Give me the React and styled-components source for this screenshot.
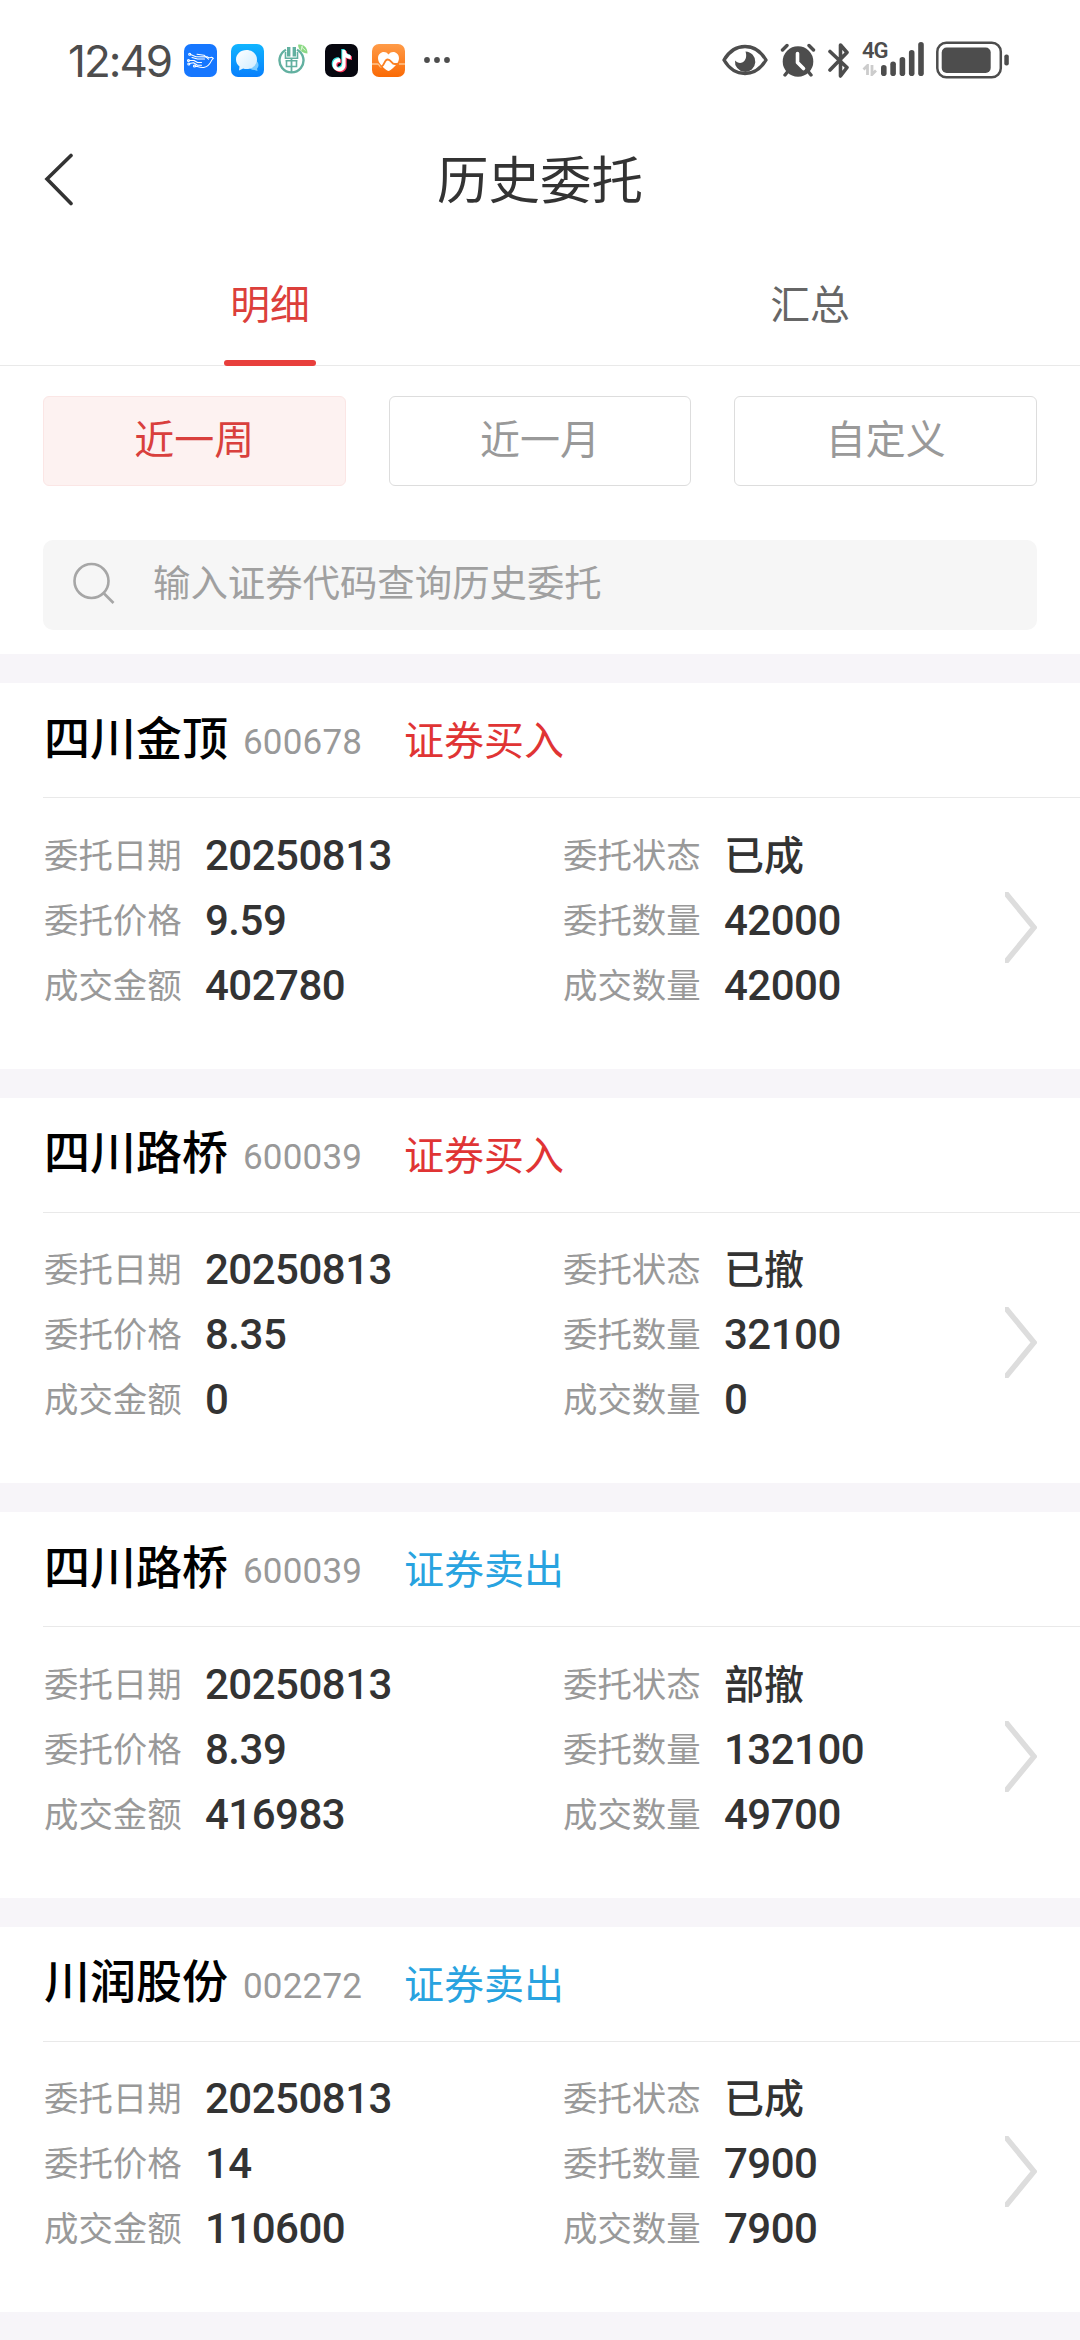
import React, { useState } from 'react';
import styled, { createGlobalStyle } from 'styled-components';

const GlobalStyle = createGlobalStyle`
  * {
    box-sizing: border-box;
  }
  body {
    margin: 0;
    background: #F7F5F9;
    font-family: Roboto, 'Noto Sans CJK SC', sans-serif;
  }
  button {
    padding: 0;
    border: none;
    background: none;
    font-family: inherit;
    cursor: pointer;
  }
  svg {
    display: block;
    flex-shrink: 0;
  }
`;

const Page = styled.div`
  width: 1080px;
  height: 2340px;
  overflow: hidden;
  background: #F7F5F9;
  display: flex;
  flex-direction: column;
`;

const TopArea = styled.div`
  height: 654px;
  flex-shrink: 0;
  background: #FFF;
`;

const StatusBar = styled.div`
  height: 120px;
  padding: 0 71px 0 68px;
  display: flex;
  align-items: center;
  justify-content: space-between;
`;

const StatusGroup = styled.div`
  display: flex;
  align-items: center;
`;

const Clock = styled.div`
  width: 116px;
  color: #4D4D4D;
  font-family: Inter, sans-serif;
  font-size: 44px;
  line-height: 50px;
  letter-spacing: -2px;
  padding-top: 2px;
  white-space: nowrap;
`;

const AppIcons = styled.div`
  display: flex;
  gap: 14px;
  margin-right: 18px;
`;

const Network = styled.div`
  width: 62px;
  height: 36px;
  margin: 0 12px 0 12px;
  display: flex;
  justify-content: space-between;
`;

const NetworkType = styled.div`
  width: 19px;
  color: #4D4D4D;
  font-size: 22px;
  font-weight: 600;
  line-height: 18px;
  letter-spacing: -1px;
  white-space: nowrap;
  display: flex;
  flex-direction: column;
  gap: 4px;
`;

const NavBar = styled.div`
  height: 120px;
  padding: 0 44px;
  display: grid;
  grid-template-columns: 60px 1fr 60px;
  align-items: center;
`;

const NavTitle = styled.div`
  padding-top: 3px;
  color: #333;
  font-size: 51.5px;
  line-height: 60px;
  text-align: center;
`;

const Tabs = styled.div`
  height: 126px;
  display: flex;
  border-bottom: 1px solid #E9E9E9;
`;

const Tab = styled.button`
  flex: 1;
  height: 126px;
  padding-top: 36px;
  display: flex;
  flex-direction: column;
  align-items: center;
  justify-content: space-between;
  color: ${props => (props.$active ? '#DC3F3B' : '#666')};
  font-size: 39.8px;
  line-height: 60px;
`;

const TabLine = styled.div`
  width: 92px;
  height: 6px;
  border-radius: 3px;
  background: #E83F3C;
`;

const Ranges = styled.div`
  display: flex;
  gap: 43px;
  padding: 30px 43px 0;
`;

const RangeButton = styled.button`
  flex: 1;
  height: 90px;
  padding-bottom: 8px;
  border-radius: 6px;
  border: 1.5px solid ${props => (props.$active ? '#FBE6E5' : '#DDD')};
  background: ${props => (props.$active ? '#FDF2F1' : '#FFF')};
  color: ${props => (props.$active ? '#D9403D' : '#999')};
  font-size: 40px;
`;

const SearchBox = styled.label`
  height: 90px;
  margin: 54px 43px 0;
  padding-left: 30px;
  border-radius: 10px;
  background: #F6F6F6;
  display: flex;
  align-items: center;
  gap: 38px;
`;

const SearchInput = styled.input`
  width: 700px;
  padding: 0 0 2px;
  border: none;
  outline: none;
  background: none;
  font-family: inherit;
  font-size: 37.4px;
  color: #333;

  &::placeholder {
    color: #A0A0A0;
    opacity: 1;
  }
`;

const OrderList = styled.div`
  display: flex;
  flex-direction: column;
  gap: 29px;
  padding-top: 29px;
`;

const OrderCard = styled.div`
  height: 385.5px;
  background: #FFF;
`;

const OrderHead = styled.div`
  height: 115px;
  margin-left: 43px;
  padding: 0 0 3px 1px;
  border-bottom: 1.5px solid #E9E9E9;
  display: flex;
  align-items: center;
`;

const StockName = styled.div`
  width: 199px;
  color: #000;
  font-size: 46px;
  font-weight: 500;
  line-height: 60px;
`;

const StockCode = styled.div`
  width: 161px;
  padding-top: 9px;
  color: #999;
  font-size: 35px;
  line-height: 50px;
  letter-spacing: 0.2px;
`;

const Side = styled.div`
  padding-top: 7px;
  color: ${props => (props.$sell ? '#28A3E0' : '#E03434')};
  font-size: 40px;
  line-height: 50px;
`;

const OrderBody = styled.div`
  padding: 25px 43px 0;
  display: flex;
`;

const Fields = styled.div`
  flex: 1;
  display: grid;
  grid-template-columns: 519px 1fr;
  grid-auto-rows: 65px;
`;

const Field = styled.div`
  display: flex;
  align-items: center;
`;

const FieldLabel = styled.div`
  width: 162px;
  padding-left: 1px;
  color: #999;
  font-size: 34.4px;
  line-height: 64px;
`;

const FieldValue = styled.div`
  color: #333;
  font-size: ${props => (props.$text ? '40px' : '42px')};
  font-weight: 500;
  line-height: 64px;
  letter-spacing: ${props => (props.$text ? '0' : '-0.5px')};
  padding-top: ${props => (props.$text ? '2px' : '0')};
`;

const MoreArrow = styled.svg`
  margin-top: 69px;
`;

const orders = [
  { name: '四川金顶', code: '600678', side: '证券买入', date: '20250813', status: '已成', price: '9.59', amount: '42000', dealMoney: '402780', dealAmount: '42000' },
  { name: '四川路桥', code: '600039', side: '证券买入', date: '20250813', status: '已撤', price: '8.35', amount: '32100', dealMoney: '0', dealAmount: '0' },
  { name: '四川路桥', code: '600039', side: '证券卖出', date: '20250813', status: '部撤', price: '8.39', amount: '132100', dealMoney: '416983', dealAmount: '49700' },
  { name: '川润股份', code: '002272', side: '证券卖出', date: '20250813', status: '已成', price: '14', amount: '7900', dealMoney: '110600', dealAmount: '7900' },
];

const tabs = ['明细', '汇总'];
const ranges = ['近一周', '近一月', '自定义'];

const BirdApp = () => (
  <svg width="33" height="33" viewBox="0 0 33 33">
    <rect width="33" height="33" rx="7" fill="#1677FF" />
    <g fill="none" stroke="#FFF" strokeWidth="1.1" strokeLinecap="round" strokeLinejoin="round">
      <path d="M6.5 10.5l5.500 2.200 11.500 .2c2.200 2.500 4.500-1.500 5.800 1.600-2.600 1-2.300 7.500-8.800 8.800-3.500.8-6.500-.6-9-1.200" />
      <path d="M8 13.500l5.500 1.500h7M5 16.500h5l3.500 2h4M5.500 19.500l4-.8 4 2.500h4M13 10.200l7 1 4.500 4" />
      <circle cx="5.700" cy="10.200" r="1" />
      <circle cx="4.500" cy="16.500" r="1" />
      <circle cx="4.800" cy="20" r="1" />
      <circle cx="10.500" cy="22" r="1" />
    </g>
  </svg>
);

const ChatApp = () => (
  <svg width="33" height="33" viewBox="0 0 33 33">
    <defs>
      <linearGradient id="chatBg" x1="0" y1="0" x2="0" y2="1">
        <stop offset="0" stopColor="#10B5FF" />
        <stop offset="1" stopColor="#087FFC" />
      </linearGradient>
      <linearGradient id="chatBubble" x1="0" y1="0" x2="1" y2="1">
        <stop offset="0" stopColor="#FFF" />
        <stop offset="1" stopColor="#CDEBFF" />
      </linearGradient>
    </defs>
    <rect width="33" height="33" rx="7" fill="url(#chatBg)" />
    <path d="M22 15.500a5.500 5.500 0 0 1 4 9.200l.5 2.300-3-1a6 6 0 0 1-6-5z" fill="#7CCBFF" />
    <path d="M15.500 6C21.500 6 26 10.200 26 15.500S21.500 25 15.500 25c-1.200 0-2.300-.1-3.300-.5L8 26.500l.5-4C6.300 20.800 5 18.300 5 15.500 5 10.200 9.500 6 15.500 6z" fill="url(#chatBubble)" />
  </svg>
);

const BankApp = () => (
  <svg width="33" height="33" viewBox="0 0 33 33">
    <g fill="none" stroke="#62B0A0">
      <path d="M8 5.700A12 12 0 1 0 19 5.700" strokeWidth="2.400" />
      <path d="M10.700 3v9.500M16.300 3v9.500" strokeWidth="3.400" />
      <path d="M13.500 14v14" strokeWidth="1.800" />
      <path d="M7.500 8v6.300h12V8M7.500 16.800h12M8.500 17v5.500h10V17" strokeWidth="1.600" />
    </g>
    <path d="M20 .8c4.500-1 9.500 2 9.500 8.700C24.500 9.200 20.500 6.500 20 .8z" fill="#8BD884" />
    <path d="M23 2.500l4.500 4M24.500 1.500l-1.500 5" stroke="#E9FBE3" strokeWidth=".9" />
  </svg>
);

const TiktokApp = () => {
  const note = 'M17.300 6h3.200c.3 3.400 2.200 5 5.300 5.300v3.600c-2 0-3.700-.6-5.200-1.600v7.600c0 8-12.500 8.800-12.900.1-.1-4.400 3.400-7.200 7.500-6.600v3.800c-2.200-.6-4 .7-3.900 2.700.2 4 5.900 3.600 6-.8z';
  return (
    <svg width="33" height="33" viewBox="0 0 33 33">
      <rect width="33" height="33" rx="7" fill="#07070F" />
      <path d={note} transform="translate(-1 -1)" fill="#38E5E5" />
      <path d={note} transform="translate(1.200 1)" fill="#F9355B" />
      <path d={note} fill="#FFF" />
    </svg>
  );
};

const HealthApp = () => (
  <svg width="33" height="33" viewBox="0 0 33 33">
    <defs>
      <linearGradient id="healthBg" x1="0" y1="0" x2="0" y2="1">
        <stop offset="0" stopColor="#FF9B48" />
        <stop offset="1" stopColor="#FA6A05" />
      </linearGradient>
    </defs>
    <rect width="33" height="33" rx="7" fill="url(#healthBg)" />
    <path d="M0 20h5.500c2 0 2 3.500 4 3.200M26 20h7" fill="none" stroke="#FFC58E" strokeWidth="1.300" />
    <path d="M16.500 10.500c3.200-4.600 10.500-2.500 10.500 3.800 0 5-5.500 9.500-9.200 12.300-.8.600-1.800.6-2.600 0C11.500 23.800 6 19.300 6 14.300 6 8 13.300 5.900 16.500 10.500z" fill="#FFF" />
    <path d="M8.500 22.500c3.500 1 3.500-7 7.200-7 3.500 0 3.800 4.500 7 4.500H27" fill="none" stroke="#FB8124" strokeWidth="1.800" />
  </svg>
);

const DotsIcon = () => (
  <svg width="28" height="8" viewBox="0 0 28 8" fill="#4D4D4D">
    <circle cx="4" cy="4" r="2.900" />
    <circle cx="14" cy="4" r="2.900" />
    <circle cx="24" cy="4" r="2.900" />
  </svg>
);

const EyeIcon = () => (
  <svg width="46" height="32" viewBox="0 0 46 32">
    <path d="M2 16C7 7.500 14 2.500 23 2.500S39 7.500 44 16C39 24.500 32 29.500 23 29.500S7 24.500 2 16z" fill="none" stroke="#4D4D4D" strokeWidth="3.400" strokeLinejoin="round" />
    <path d="M23.500 7.500a10.200 10.200 0 1 1-10.500 9c2.500 2.800 6.500 3.300 9 .8 2.600-2.600 2.600-6.600 1.500-9.800z" fill="#4D4D4D" />
  </svg>
);

const AlarmIcon = () => (
  <svg width="36" height="34" viewBox="0 0 36 34">
    <g stroke="#4D4D4D" strokeWidth="3.400" strokeLinecap="round">
      <path d="M2.500 7L7 2.500M33.500 7L29 2.500M9 27l-4 5M27 27l4 5" />
    </g>
    <circle cx="18" cy="18.500" r="15.300" fill="#4D4D4D" />
    <path d="M17.500 10.500v9l6 6" fill="none" stroke="#FFF" strokeWidth="3.600" strokeLinecap="round" strokeLinejoin="round" />
  </svg>
);

const BluetoothIcon = () => (
  <svg width="22" height="35" viewBox="0 0 22 35">
    <path d="M2 8.500l17 16-6.500 8.500V2L19 9.500 2 27" fill="none" stroke="#4D4D4D" strokeWidth="3.600" strokeLinecap="round" strokeLinejoin="round" />
  </svg>
);

const TransferIcon = () => (
  <svg width="16" height="12" viewBox="0 0 16 12">
    <path d="M5.500 11V1.500L1.500 5.500M10 1v9.500l4-4" fill="none" stroke="#CCC" strokeWidth="2.800" />
  </svg>
);

const SignalIcon = () => (
  <svg width="43" height="34" viewBox="0 0 43 34" fill="#4D4D4D">
    <rect x="0" y="23" width="5.600" height="11" rx="2.800" />
    <rect x="9.300" y="19.500" width="5.600" height="14.500" rx="2.800" />
    <rect x="18.600" y="15" width="5.600" height="19" rx="2.800" />
    <rect x="27.900" y="8" width="5.600" height="26" rx="2.800" />
    <rect x="37.200" y="0" width="5.600" height="34" rx="2.800" />
  </svg>
);

const BatteryIcon = () => (
  <svg width="73" height="38" viewBox="0 0 73 38">
    <rect x="1.300" y="1.800" width="63.500" height="34.500" rx="9" fill="none" stroke="#4D4D4D" strokeWidth="2.500" />
    <rect x="5.700" y="6.500" width="49" height="25.500" rx="5" fill="#4D4D4D" />
    <rect x="68.300" y="13.500" width="4.500" height="11" rx="2" fill="#4D4D4D" />
  </svg>
);

const App = () => {
  const [tab, setTab] = useState('明细');
  const [range, setRange] = useState('近一周');
  const [keyword, setKeyword] = useState('');

  return (
    <Page>
      <GlobalStyle />
      <TopArea>
        <StatusBar>
          <StatusGroup>
            <Clock>12:49</Clock>
            <AppIcons>
              <BirdApp />
              <ChatApp />
              <BankApp />
              <TiktokApp />
              <HealthApp />
            </AppIcons>
            <DotsIcon />
          </StatusGroup>
          <StatusGroup>
            <EyeIcon />
            <StatusGroup style={{ marginLeft: 12, gap: 12 }}>
              <AlarmIcon />
              <BluetoothIcon />
            </StatusGroup>
            <Network>
              <NetworkType>
                4G
                <TransferIcon />
              </NetworkType>
              <SignalIcon />
            </Network>
            <BatteryIcon />
          </StatusGroup>
        </StatusBar>
        <NavBar>
          <button type="button" aria-label="返回">
            <svg width="30" height="54" viewBox="0 0 30 54">
              <path d="M27 2.500L3 26 27 50.500" fill="none" stroke="#333" strokeWidth="3.600" strokeLinecap="round" />
            </svg>
          </button>
          <NavTitle>历史委托</NavTitle>
        </NavBar>
        <Tabs>
          {tabs.map(item => (
            <Tab key={item} $active={tab === item} onClick={() => setTab(item)}>
              {item}
              {tab === item && <TabLine />}
            </Tab>
          ))}
        </Tabs>
        <Ranges>
          {ranges.map(item => (
            <RangeButton key={item} $active={range === item} onClick={() => setRange(item)}>
              {item}
            </RangeButton>
          ))}
        </Ranges>
        <SearchBox>
          <svg width="42" height="46" viewBox="0 0 42 46" fill="none" stroke="#A6A6A6" strokeWidth="2.600">
            <circle cx="18.500" cy="19" r="17" />
            <path d="M31 31.500l9.500 9.500" />
          </svg>
          <SearchInput
            value={keyword}
            placeholder="输入证券代码查询历史委托"
            onChange={e => setKeyword(e.target.value)}
          />
        </SearchBox>
      </TopArea>
      <OrderList>
        {orders.map((order, index) => (
          <OrderCard key={index}>
            <OrderHead>
              <StockName>{order.name}</StockName>
              <StockCode>{order.code}</StockCode>
              <Side $sell={order.side === '证券卖出'}>{order.side}</Side>
            </OrderHead>
            <OrderBody>
              <Fields>
                <Field><FieldLabel>委托日期</FieldLabel><FieldValue>{order.date}</FieldValue></Field>
                <Field><FieldLabel>委托状态</FieldLabel><FieldValue $text>{order.status}</FieldValue></Field>
                <Field><FieldLabel>委托价格</FieldLabel><FieldValue>{order.price}</FieldValue></Field>
                <Field><FieldLabel>委托数量</FieldLabel><FieldValue>{order.amount}</FieldValue></Field>
                <Field><FieldLabel>成交金额</FieldLabel><FieldValue>{order.dealMoney}</FieldValue></Field>
                <Field><FieldLabel>成交数量</FieldLabel><FieldValue>{order.dealAmount}</FieldValue></Field>
              </Fields>
              <MoreArrow width="32" height="71" viewBox="0 0 32 71">
                <path d="M-1 -1L29 35.500-1 72" fill="none" stroke="#DDD" strokeWidth="5.500" />
              </MoreArrow>
            </OrderBody>
          </OrderCard>
        ))}
      </OrderList>
    </Page>
  );
};

export default App;
